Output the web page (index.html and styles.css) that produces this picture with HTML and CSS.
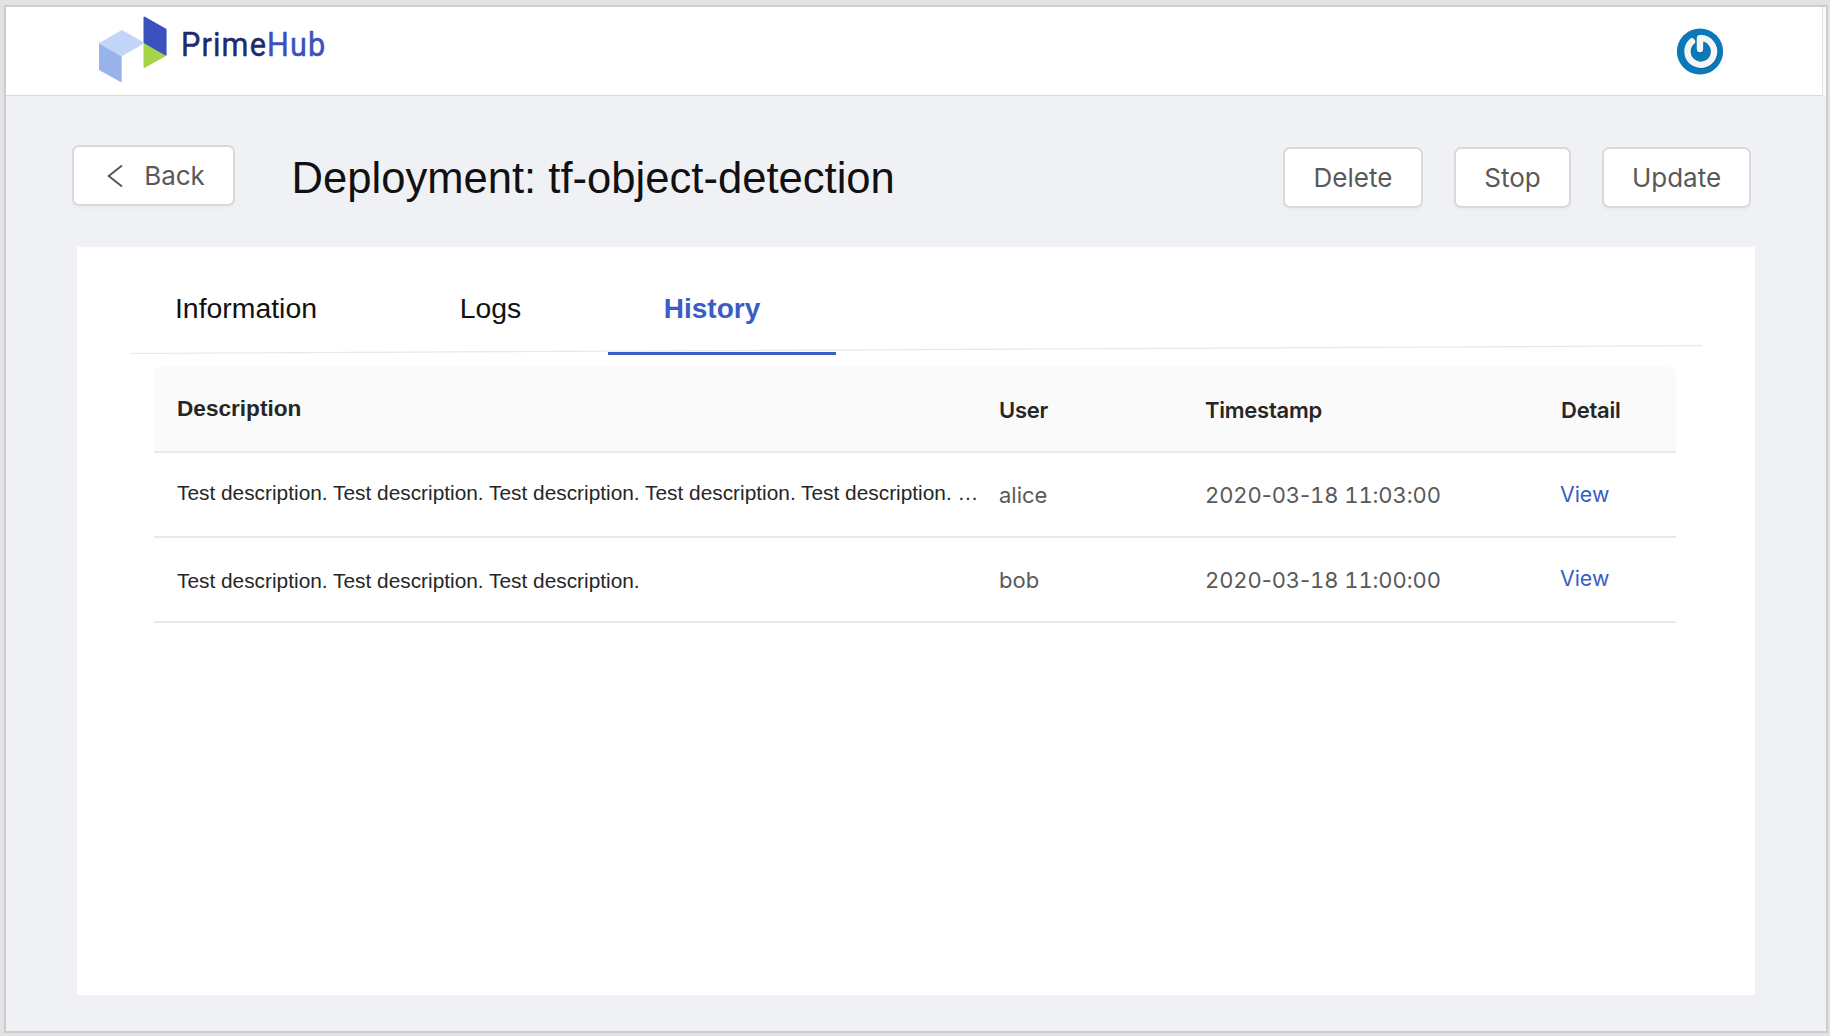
FILE: index.html
```html
<!DOCTYPE html>
<html lang="en">
<head>
<meta charset="utf-8">
<title>PrimeHub - Deployment</title>
<link rel="stylesheet" href="styles.css">
</head>
<body>
<div class="frame">
  <header class="topbar">
    <div class="brand">
      <svg class="brand-mark" width="70" height="68" viewBox="0 0 70 68" stroke-width="2" stroke-linejoin="round">
        <path d="M2 28.500V54.500L22.700 66V42Z" fill="#98b3ea" stroke="#98b3ea"/>
        <path d="M2.500 28.300L24 16L45 28L23.500 40.500Z" fill="#c2d5f8" stroke="#c2d5f8"/>
        <path d="M46.500 29.500V52L67 40.500Z" fill="#a8d44a" stroke="#a8d44a"/>
        <path d="M46.500 2.500V27.300L67.600 39.500V14.500Z" fill="#3b51bf" stroke="#3b51bf"/>
      </svg>
      <span class="brand-name">Prime<span class="brand-hub">Hub</span></span>
    </div>
    <svg class="avatar" width="46" height="47" viewBox="0 0 46 47">
      <circle cx="23" cy="23.500" r="23.100" fill="#0b78b9"/>
      <path d="M15 13.700A13.300 13.300 0 1 0 23 10.200V21.200" transform="translate(.5 .7)" fill="none" stroke="#07588a" stroke-opacity=".5" stroke-width="6.800" stroke-linecap="round" stroke-linejoin="round"/>
      <path d="M15 13.500A13.300 13.300 0 1 0 23 10.200V21" fill="none" stroke="#f5f5f5" stroke-width="6.400" stroke-linecap="round" stroke-linejoin="round"/>
    </svg>
  </header>
  <div class="page-head">
    <button class="btn btn-back">
      <svg width="16" height="24" viewBox="0 0 16 24" fill="none" stroke="#595959" stroke-width="2"><path d="M15 1.500L1.800 12L15 22.500"/></svg>
      <span>Back</span>
    </button>
    <h1 class="title">Deployment: tf-object-detection</h1>
    <div class="actions">
      <button class="btn btn-delete">Delete</button>
      <button class="btn btn-stop">Stop</button>
      <button class="btn btn-update">Update</button>
    </div>
  </div>
  <main class="card">
    <nav class="tabs">
      <a class="tab tab-info">Information</a>
      <a class="tab tab-logs">Logs</a>
      <a class="tab tab-active">History</a>
      <svg class="tab-rule" width="1573" height="12" viewBox="0 0 1573 12"><path d="M0 9.500L1572 1.700" stroke="#e8e8e8" stroke-width="1.200"/></svg>
    </nav>
    <div class="table">
      <div class="row row-head">
        <div class="cell-desc">Description</div><div>User</div><div>Timestamp</div><div class="head-detail">Detail</div>
      </div>
      <div class="row row-first">
        <div class="cell-desc">Test description. Test description. Test description. Test description. Test description. …</div><div>alice</div><div class="time">2020<span class="dash">-</span>03<span class="dash">-</span>18 11:03:00</div><div class="link">View</div>
      </div>
      <div class="row row-second">
        <div class="cell-desc">Test description. Test description. Test description.</div><div>bob</div><div class="time">2020<span class="dash">-</span>03<span class="dash">-</span>18 11:00:00</div><div class="link">View</div>
      </div>
    </div>
  </main>
</div>
</body>
</html>
```
FILE: styles.css
```css
* { box-sizing: border-box; }
body {
  margin: 0;
  height: 1036px;
  padding: 5px 2px 3px 4px;
  background: #e3e3e3;
  font-family: Inter, "Liberation Sans", sans-serif;
  overflow: hidden;
}
.frame {
  height: 1028px;
  border: 2px solid #cdcdcd;
  background: #f0f1f5;
  box-shadow: 0 0 1px #d8d8d8;
}
.topbar {
  display: flex;
  justify-content: space-between;
  height: 89px;
  margin-right: 3px;
  padding: 0 99px 0 92px;
  background: #fff;
  border-right: 1px solid #e2e2e2;
  border-bottom: 1px solid #d9d9d9;
  box-shadow: 3px 0 0 #fafafa;
}
.brand { display: flex; }
.brand-mark { margin-top: 8px; }
.brand-name {
  margin: 15px 0 0 13px;
  font: 400 34px/44px Roboto, sans-serif;
  letter-spacing: 1.3px;
  transform: scaleX(.9);
  transform-origin: left;
  -webkit-text-stroke: 0.5px currentColor;
  color: #1f2b6c;
}
.brand-hub { color: #3b51bf; }
.avatar { margin-top: 21px; }
.page-head {
  display: flex;
  align-items: flex-start;
  height: 151px;
  padding: 49px 75px 0 66px;
}
.btn {
  display: flex;
  align-items: center;
  justify-content: center;
  height: 61px;
  padding: 1px 0 0;
  background: #fff;
  border: 2px solid #d9d9d9;
  border-radius: 7px;
  box-shadow: 0 3px 1px rgba(0, 0, 0, .02);
  font: 400 26px/32px Inter, sans-serif;
  color: #595959;
}
.btn-back { width: 163px; gap: 21px; padding-left: 5px; }
.title {
  margin: 8px 0 0 56.5px;
  font: 400 43.6px/50px "Liberation Sans", Arial, sans-serif;
  color: #111;
  white-space: nowrap;
}
.actions {
  display: flex;
  gap: 31px;
  margin: 2px 0 0 auto;
}
.btn-delete { width: 140px; }
.btn-stop { width: 117px; }
.btn-update { width: 149px; }
.card {
  width: 1678px;
  height: 748px;
  margin-left: 71px;
  background: #fff;
}
.tabs {
  position: relative;
  display: flex;
  height: 120px;
  padding-left: 53px;
  font: 400 28.400px/34px "Liberation Sans", Arial, sans-serif;
  color: #111;
}
.tab { height: 108px; padding-top: 44px; text-align: center; }
.tab-info { width: 232px; }
.tab-logs { width: 246px; padding-left: 11px; }
.tab-active {
  width: 228px;
  padding-top: 45px;
  padding-right: 20px;
  border-bottom: 3px solid #3a5cc5;
  font-size: 28px;
  font-weight: 700;
  color: #3a5cc5;
}
.tab-rule { position: absolute; left: 53px; top: 97px; }
.table {
  width: 1522px;
  margin-left: 77px;
  font-size: 22px;
  line-height: 28px;
  color: #595959;
}
.row {
  display: grid;
  grid-template-columns: 822px 206px 355px auto;
  height: 85px;
  padding: 28px 0 0 23px;
  border-bottom: 2px solid #e8e8e8;
}
.row-head {
  height: 86px;
  padding-top: 29px;
  background: #fafafa;
  border-radius: 6px 6px 0 0;
  color: #262626;
  font-weight: 600;
  letter-spacing: -0.25px;
}
.cell-desc {
  font-family: "Liberation Sans", Arial, sans-serif;
  font-size: 20.850px;
  color: #262626;
  white-space: nowrap;
}
.row-head .cell-desc { margin-top: -1px; font-size: 22.600px; letter-spacing: 0; }
.head-detail { padding-left: 1px; }
.time { font-variant-numeric: tabular-nums; letter-spacing: -0.1px; }
.dash { font-variant-numeric: normal; }
.link { font-size: 21.300px; color: #3a5cc5; }
.row-first .cell-desc { margin-top: -2px; }
.row-first .link { margin-top: -1px; }
.row-second .cell-desc { margin-top: 1px; }
.row-second .link { margin-top: -2px; }
```
